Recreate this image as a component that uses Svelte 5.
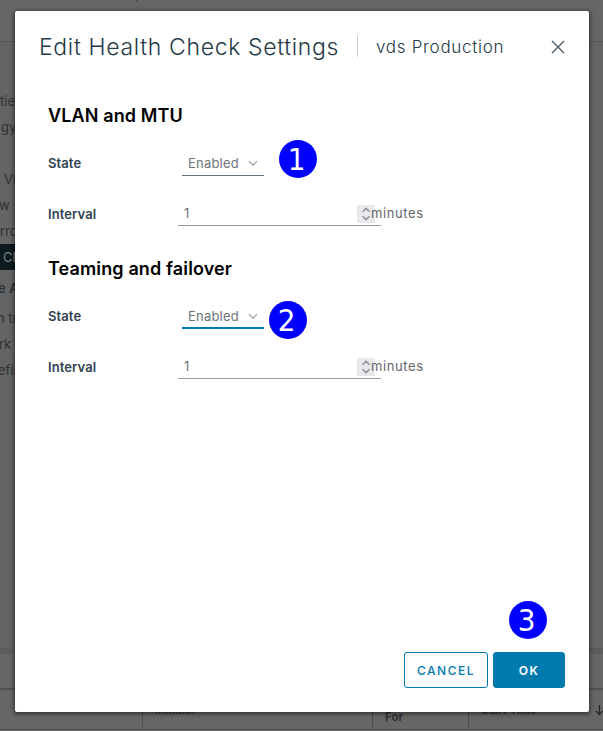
<script>
  const sections = [
    { title: 'VLAN and MTU', focused: false },
    { title: 'Teaming and failover', focused: true },
  ];
  const nav = [
    { text: 'tie', x: 0 },
    { text: 'gy', x: 1 },
    { text: '', x: 0 },
    { text: 'VI', x: 4 },
    { text: 'w', x: -1 },
    { text: 'rro', x: 0 },
    { text: 'Ch', x: 3, active: true },
  ];
  const more = [
    { text: 'e A', x: -2, bold: true },
    { text: 'n tr', x: -3 },
    { text: 'rk', x: -1 },
    { text: 'efin', x: -2 },
  ];
</script>

<div class="page">
  <div class="topbar"><span class="tick"></span></div>
  <div class="content">
    <nav>
      {#each nav as item}
        <div class="item" class:active={item.active}><span style="margin-left:{item.x}px">{item.text}</span></div>
      {/each}
      <div class="more">
        {#each more as item}
          <div class="item" class:bold={item.bold}><span style="margin-left:{item.x}px">{item.text}</span></div>
        {/each}
      </div>
    </nav>
  </div>
  <div class="splitter"></div>
  <div class="tabs"></div>
  <div class="table">
    <div class="cell c1"></div>
    <div class="cell c2"><span>Initiator</span></div>
    <div class="cell c3"><span>For</span></div>
    <div class="cell c4">
      <span>Start Time</span>
      <svg width="9" height="12" viewBox="0 0 9 12"><path d="M4.5 1v9.5M1 7l3.5 3.5L8 7" /></svg>
    </div>
  </div>

  <div class="modal">
    <header>
      <h1>Edit Health Check Settings</h1>
      <span class="divider"></span>
      <span class="object">vds Production</span>
      <svg class="close" width="14" height="14" viewBox="0 0 14 14"><path d="M1 1l12 12M13 1L1 13" /></svg>
    </header>

    <main>
      {#each sections as s}
        <section>
          <h2>{s.title}</h2>
          <div class="row state">
            <span class="label">State</span>
            <div class="select" class:focused={s.focused}>
              <span>Enabled</span>
              <svg width="10" height="7" viewBox="0 0 10 7"><path d="M1 1.2l4 4 4-4" /></svg>
            </div>
          </div>
          <div class="row interval">
            <span class="label int">Interval</span>
            <div class="number">
              <span>1</span>
              <div class="spin">
                <svg width="10" height="14" viewBox="0 0 10 14"><path d="M1.5 4.8L5 1.4l3.5 3.4M1.5 9.2L5 12.6l3.5-3.4" /></svg>
              </div>
            </div>
            <span class="unit">minutes</span>
          </div>
        </section>
      {/each}
    </main>

    <footer>
      <button class="cancel">CANCEL</button>
      <button class="ok">OK</button>
    </footer>
  </div>

  <div class="marker" style="left:279px;top:140px">1</div>
  <div class="marker" style="left:269px;top:301px">2</div>
  <div class="marker" style="left:509px;top:601px">3</div>
</div>

<style>
  .page {
    position: relative;
    width: 603px;
    height: 731px;
    overflow: hidden;
    display: flex;
    flex-direction: column;
    background: #666;
    font-family: Inter, "Liberation Sans", sans-serif;
    font-size: 13px;
    color: #2b3135;
  }
  .page * { box-sizing: border-box; }
  .topbar { height: 42px; border-bottom: 1px solid #505050; }
  .tick { display: block; width: 1px; height: 1px; margin-left: 136px; background: #333; }
  .content { height: 606px; padding-top: 46px; background: #646464; }
  nav { width: 30px; }
  .item { height: 26px; line-height: 26px; white-space: nowrap; display: flex; }
  .active { background: #0c191e; color: #7b8285; }
  .more { padding-top: 5px; }
  .bold { font-weight: 600; margin-bottom: 4px; }
  .splitter { height: 6px; background: #5c5c5c; }
  .tabs { height: 36px; border-bottom: 2px solid #515151; background: #666; }
  .table { height: 40px; display: flex; border-bottom: 1px solid #4b4b4b; font-weight: 600; font-size: 11px; }
  .cell { height: 37px; border-right: 1px solid #4b4b4b; line-height: 14px; color: #303030; }
  .c1 { width: 143px; }
  .c2 { width: 230px; padding: 13px 0 0 12px; letter-spacing: .1px; }
  .c3 { width: 96px; padding: 20px 0 0 12px; font-size: 11.5px; }
  .c4 { flex: 1; padding: 13px 0 0 12px; border: 0; display: flex; }
  .c4 svg { margin-left: auto; margin-top: 1px; margin-right: -1px; fill: none; stroke: #222; stroke-width: 1.1; }

  .modal {
    position: absolute;
    left: 15px;
    top: 11px;
    width: 574px;
    height: 701px;
    display: flex;
    flex-direction: column;
    background: #fff;
    border-radius: 2px;
    box-shadow: 0 1px 4px 1px rgba(0, 0, 0, .5);
  }
  header { display: flex; align-items: center; height: 70px; padding: 0 24px; color: #253b48; }
  h1 { margin: 2px 0 0; width: 301px; font-size: 23px; font-weight: 300; line-height: 30px; letter-spacing: .66px; white-space: nowrap; }
  .divider { width: 1px; height: 22px; margin: 0 18px 0 17px; background: #ccc; }
  .object { margin-top: 2px; font-size: 17px; font-weight: 300; white-space: nowrap; letter-spacing: .7px; }
  .close { margin-left: auto; margin-top: 2px; fill: none; stroke: #4b5963; stroke-width: 1.4; }
  main { flex: 1; padding: 23px 33px 0; }
  section { height: 153px; }
  h2 { margin: 0; height: 24px; font-size: 18px; line-height: 24px; font-weight: 600; color: #000; letter-spacing: .13px; white-space: nowrap; }
  .row { display: flex; align-items: flex-start; }
  .state { padding-top: 24px; height: 60px; }
  .label { width: 134px; font-weight: 600; line-height: 22px; color: #314351; letter-spacing: .1px; }
  .label.int { width: 130px; line-height: 24px; }
  .select { width: 82px; height: 24px; padding: 0 6px 1px; display: flex; align-items: center; border-bottom: 1px solid #62717d; color: #6d7377; letter-spacing: .2px; }
  .select.focused { border-bottom: 2px solid #0079b0; padding-bottom: 0; }
  .select svg { margin-left: auto; fill: none; stroke: #999; stroke-width: 1.1; }
  .interval { padding-top: 14px; }
  .number { width: 203px; height: 24px; margin-right: -10px; padding: 0 6px 0 6px; display: flex; align-items: center; border-bottom: 1px solid #999; color: #6d7377; }
  .number > span { padding-bottom: 1px; }
  .spin { width: 18px; height: 18px; margin-left: auto; display: flex; align-items: center; justify-content: center; background: #e9e9ed; }
  .spin svg { fill: none; stroke: #8f8f9d; stroke-width: 1.5; }
  .unit { position: relative; line-height: 23px; color: #62676b; letter-spacing: .6px; }
  footer { height: 60px; padding-right: 24px; display: flex; justify-content: flex-end; gap: 5px; }
  button { height: 36px; padding: 0; border: 1px solid #0079ad; border-radius: 3px; font: 500 12px Inter, sans-serif; letter-spacing: 1.5px; }
  .cancel { width: 84px; color: #0079ad; background: #fff; }
  .ok { width: 72px; color: #fff; background: #0079ad; font-weight: 600; }
  .marker { position: absolute; width: 38px; height: 38px; border-radius: 50%; background: #00f; color: #fff; font: 31px/38px "DejaVu Sans Condensed", "DejaVu Sans", sans-serif; font-stretch: condensed; text-align: center; padding-right: 3px; }
</style>
